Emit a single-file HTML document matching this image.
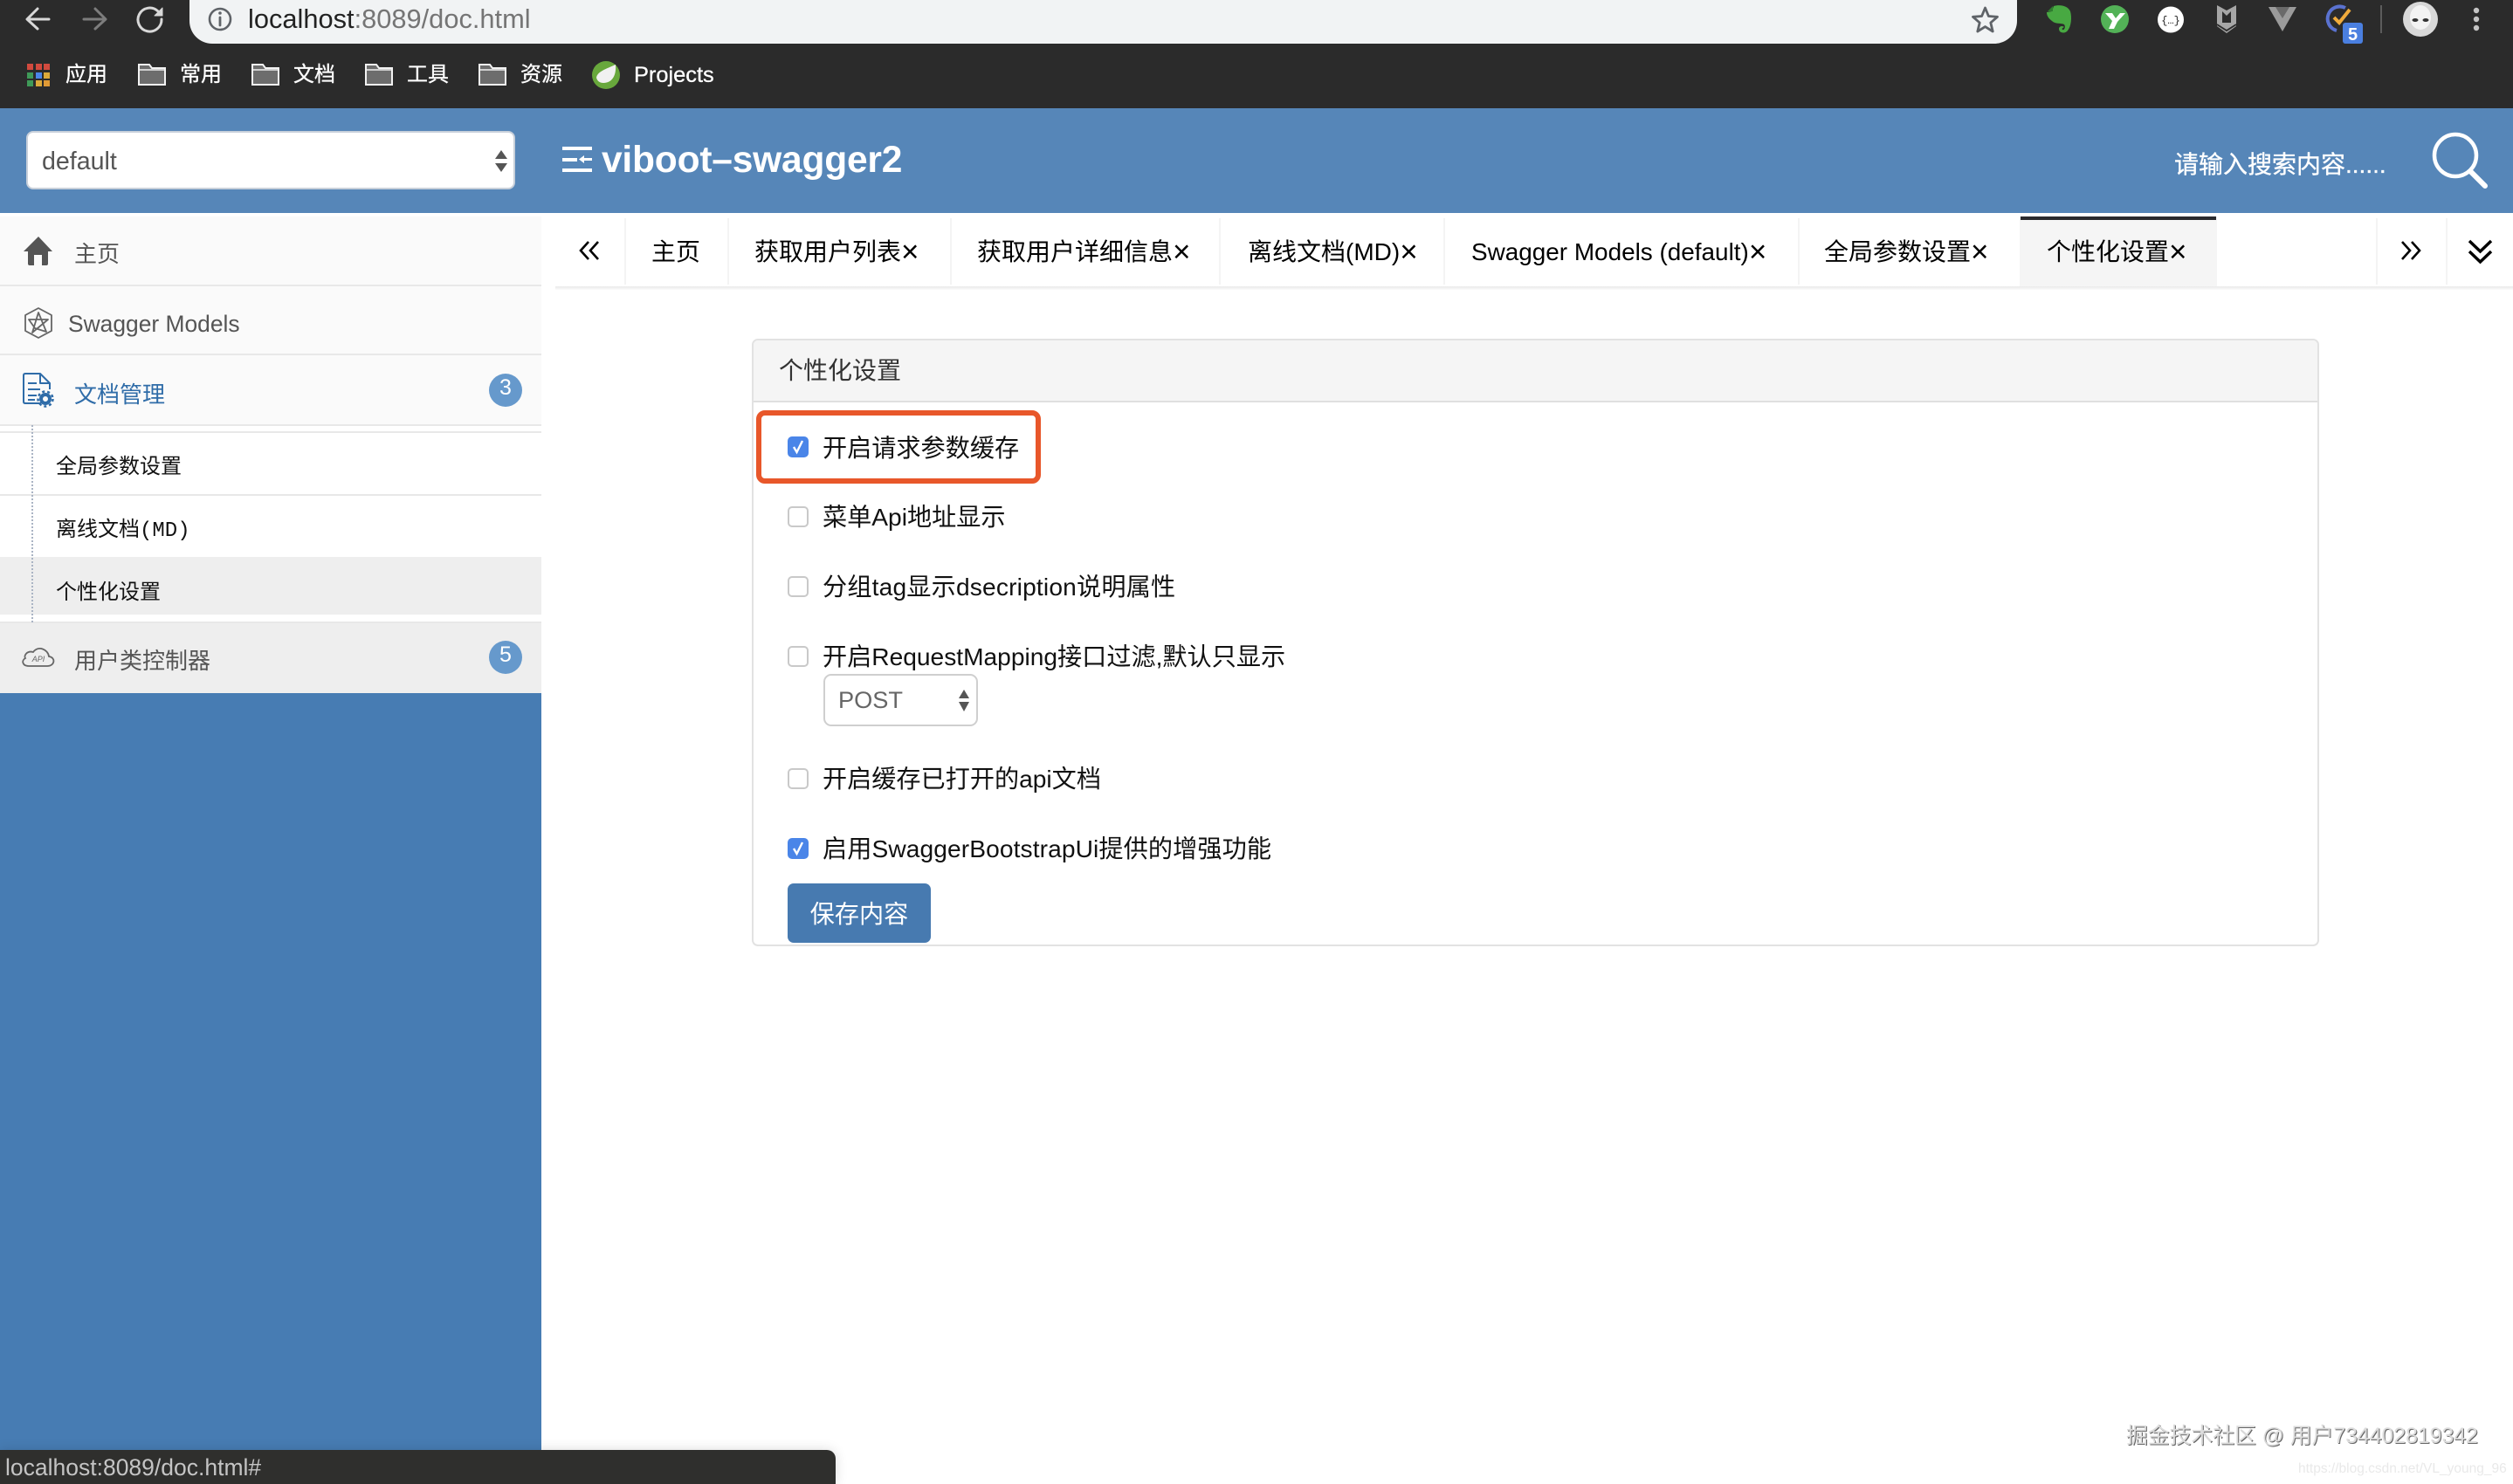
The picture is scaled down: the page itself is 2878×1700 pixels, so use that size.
<!DOCTYPE html>
<html lang="zh-CN">
<head>
<meta charset="utf-8">
<title>viboot-swagger2</title>
<style>
html,body{margin:0;padding:0;background:#fff;}
#p{position:relative;width:2878px;height:1700px;overflow:hidden;background:#fff;font-family:"Liberation Sans","Noto Sans CJK SC",sans-serif;}
#p div{position:absolute;box-sizing:border-box;}
.t{white-space:nowrap;line-height:40px;height:40px;}
.tab{font-size:28px;color:#000;}
.tab i{font-style:normal;font-size:35px;line-height:0;position:relative;top:2px;font-weight:normal;}
.lab{font-size:28.15px;color:#111;left:942px;}
.menu{font-size:26px;color:#555;}
.sub{font-size:24px;color:#111;left:64px;font-family:"Liberation Mono","Noto Sans CJK SC",monospace;}
.bm{font-size:24px;color:#fff;-webkit-text-stroke:.3px #fff;}
.cb{left:902px;width:24px;height:24px;border:2px solid #c9c9c9;border-radius:5px;background:#fff;}
.cb.on{background:#4a85e8;border-color:#4a85e8;}
.dv{top:250px;width:2px;height:76px;background:#f4f4f4;}
.li{left:0;width:620px;height:2px;background:#e8e8e8;}
svg{position:absolute;left:0;top:0;}
</style>
</head>
<body>
<div id="p">
  <!-- browser chrome -->
  <div style="left:0;top:0;width:2878px;height:124px;background:#2b2b2b;"></div>
  <div style="left:217px;top:-30px;width:2093px;height:80px;background:#f1f3f4;border-radius:26px;"></div>
  <div class="t" style="left:284px;top:2px;font-size:30.8px;color:#757575;"><span style="color:#222;">localhost</span>:8089/doc.html</div>

  <div class="t bm" style="left:75px;top:66px;">应用</div>
  <div class="t bm" style="left:206px;top:66px;">常用</div>
  <div class="t bm" style="left:336px;top:66px;">文档</div>
  <div class="t bm" style="left:466px;top:66px;">工具</div>
  <div class="t bm" style="left:596px;top:66px;">资源</div>
  <div class="t bm" style="left:726px;top:66px;font-size:25.4px;">Projects</div>

  <!-- header -->
  <div style="left:0;top:124px;width:2878px;height:120px;background:#5686b8;"></div>
  <div style="left:30px;top:150px;width:560px;height:67px;background:#fff;border:2px solid #c8d0da;border-radius:8px;"></div>
  <div class="t" style="left:48px;top:165px;font-size:28.6px;color:#555;">default</div>
  <div class="t" style="left:689px;top:164px;font-size:42.5px;font-weight:bold;color:#fff;letter-spacing:-.2px;">viboot–swagger2</div>
  <div class="t" style="left:2490px;top:169px;font-size:28px;color:#fff;-webkit-text-stroke:.35px #fff;">请输入搜索内容......</div>

  <!-- sidebar -->
  <div style="left:0;top:793px;width:620px;height:907px;background:#477cb3;"></div>
  <div style="left:0;top:248px;width:620px;height:239px;background:#fafafa;"></div>
  <div class="li" style="top:326px;"></div>
  <div class="li" style="top:405px;"></div>
  <div class="li" style="top:486px;"></div>
  <div class="li" style="top:494px;"></div>
  <div class="li" style="top:566px;"></div>
  <div style="left:0;top:638px;width:620px;height:66px;background:#eeeeee;"></div>
  <div class="li" style="top:712px;"></div>
  <div style="left:0;top:714px;width:620px;height:80px;background:#eeeeee;"></div>
  <div style="left:36px;top:487px;width:0;height:226px;border-left:2px dotted #aab4c4;"></div>

  <div class="t menu" style="left:85px;top:271px;">主页</div>
  <div class="t menu" style="left:78px;top:351px;font-size:26.4px;">Swagger Models</div>
  <div class="t menu" style="left:85px;top:432px;color:#2f6ca8;">文档管理</div>
  <div class="t menu" style="left:85px;top:737px;">用户类控制器</div>
  <div class="t sub" style="top:517px;">全局参数设置</div>
  <div class="t sub" style="top:589px;">离线文档(MD)</div>
  <div class="t sub" style="top:661px;">个性化设置</div>

  <div style="left:560px;top:428px;width:38px;height:38px;border-radius:19px;background:#6699cc;"></div>
  <div class="t" style="left:560px;top:424px;width:38px;text-align:center;font-size:25px;color:#fff;">3</div>
  <div style="left:560px;top:734px;width:38px;height:38px;border-radius:19px;background:#6699cc;"></div>
  <div class="t" style="left:560px;top:730px;width:38px;text-align:center;font-size:25px;color:#fff;">5</div>

  <!-- tabs -->
  <div style="left:636px;top:328px;width:2242px;height:4px;background:linear-gradient(#e9e9e9,#fbfbfb);"></div>
  <div class="dv" style="left:715px;"></div>
  <div class="dv" style="left:833px;"></div>
  <div class="dv" style="left:1088px;"></div>
  <div class="dv" style="left:1396px;"></div>
  <div class="dv" style="left:1653px;"></div>
  <div class="dv" style="left:2059px;"></div>
  <div class="dv" style="left:2721px;"></div>
  <div class="dv" style="left:2801px;"></div>
  <div style="left:2313px;top:248px;width:226px;height:80px;background:#f5f5f5;"></div>
  <div style="left:2314px;top:248px;width:224px;height:4px;background:#2b2b2e;"></div>

  <div class="t tab" style="left:746px;top:269px;">主页</div>
  <div class="t tab" style="left:864px;top:269px;">获取用户列表<i>×</i></div>
  <div class="t tab" style="left:1119px;top:269px;">获取用户详细信息<i>×</i></div>
  <div class="t tab" style="left:1429px;top:269px;">离线文档(MD)<i>×</i></div>
  <div class="t tab" style="left:1685px;top:269px;font-size:27.9px;">Swagger Models (default)<i>×</i></div>
  <div class="t tab" style="left:2089px;top:269px;">全局参数设置<i>×</i></div>
  <div class="t tab" style="left:2344px;top:269px;">个性化设置<i>×</i></div>

  <!-- panel -->
  <div style="left:861px;top:388px;width:1795px;height:696px;border:2px solid #e2e2e2;border-radius:7px;background:#fff;"></div>
  <div style="left:863px;top:390px;width:1791px;height:71px;background:#f5f5f5;border-bottom:2px solid #dfdfdf;border-radius:5px 5px 0 0;"></div>
  <div class="t" style="left:892px;top:405px;font-size:28px;color:#333;">个性化设置</div>

  <div style="left:866px;top:470px;width:326px;height:84px;border:6px solid #e8572a;border-radius:10px;"></div>

  <div class="cb on" style="top:500px;"></div>
  <div class="t lab" style="top:494px;">开启请求参数缓存</div>
  <div class="cb" style="top:580px;"></div>
  <div class="t lab" style="top:573px;">菜单Api地址显示</div>
  <div class="cb" style="top:660px;"></div>
  <div class="t lab" style="top:653px;letter-spacing:.18px;">分组tag显示dsecription说明属性</div>
  <div class="cb" style="top:740px;"></div>
  <div class="t lab" style="top:733px;">开启RequestMapping接口过滤,默认只显示</div>
  <div style="left:943px;top:772px;width:177px;height:60px;background:#fff;border:2px solid #cfcfcf;border-radius:9px;"></div>
  <div class="t" style="left:960px;top:782px;font-size:27.2px;color:#666;">POST</div>
  <div class="cb" style="top:880px;"></div>
  <div class="t lab" style="top:873px;">开启缓存已打开的api文档</div>
  <div class="cb on" style="top:960px;"></div>
  <div class="t lab" style="top:953px;letter-spacing:.1px;">启用SwaggerBootstrapUi提供的增强功能</div>
  <div style="left:902px;top:1012px;width:164px;height:68px;background:#477ab0;border-radius:7px;"></div>
  <div class="t" style="left:902px;top:1027px;width:164px;text-align:center;font-size:28.2px;color:#fff;">保存内容</div>

  <!-- status bubble -->
  <div style="left:0;top:1661px;width:957px;height:39px;background:#2f2f2d;border-radius:0 10px 0 0;box-shadow:0 0 14px rgba(0,0,0,.14);"></div>
  <div class="t" style="left:6px;top:1661px;font-size:26.5px;color:#c4c4c4;">localhost:8089/doc.html#</div>

  <!-- watermarks -->
  <div class="t" style="left:2435px;top:1626px;font-size:24.8px;color:#dcdcdc;text-shadow:1px 1px 0 #666;">掘金技术社区 @ 用户734402819342</div>
  <div class="t" style="left:2632px;top:1663px;font-size:15.5px;color:#e9e9e9;">https://blog.csdn.net/VL_young_96</div>

  <!-- icons -->
  <svg width="2878" height="1700" viewBox="0 0 2878 1700">
    <!-- nav -->
    <g fill="none" stroke-linecap="round" stroke-linejoin="round">
      <path d="M56 22H33M43 10L31 22L43 33" stroke="#d8d8d8" stroke-width="3"/>
      <path d="M96 22H119M109 10L121 22L109 33" stroke="#7d7d7d" stroke-width="3"/>
      <path d="M185 22A13.500 13.500 0 1 1 180.500 12.500" stroke="#d8d8d8" stroke-width="3"/>
      <path d="M186 9V18H177Z" fill="#d8d8d8" stroke="#d8d8d8" stroke-width="1"/>
      <circle cx="252" cy="22" r="12" stroke="#5f6368" stroke-width="2.600"/>
      <path d="M252 20V29" stroke="#5f6368" stroke-width="2.800"/>
    </g>
    <circle cx="252" cy="15" r="1.800" fill="#5f6368"/>
    <path d="M2273.500 9L2277.400 18.500L2287.500 19.300L2279.800 26L2282.200 36L2273.500 30.600L2264.800 36L2267.200 26L2259.500 19.300L2269.600 18.500Z" fill="none" stroke="#5f6368" stroke-width="2.800" stroke-linejoin="round"/>

    <!-- extensions -->
    <path d="M2352 7C2358 5 2368 6 2371 13C2373 20 2372 30 2368 35C2365 39 2358 38 2358 33C2358 30 2362 29 2364 31C2362 32 2361 33 2362 34C2364 35 2366 31 2364 28C2360 26 2354 28 2350 24C2346 21 2344 18 2344 14L2350 13Z" fill="#48a942"/>
    <path d="M2351 7V13H2345Z" fill="#2e7d2e"/>
    <circle cx="2422" cy="22" r="16" fill="#53b257"/>
    <path d="M2411 15H2419L2423 21L2428 15H2434L2425 25L2421 33H2415L2419 24Z" fill="#fff"/>
    <circle cx="2486" cy="22.500" r="15" fill="#fff"/>
    <text x="2486" y="27" text-anchor="middle" font-family="Liberation Mono,monospace" font-size="12" fill="#222">{…}</text>
    <path d="M2539 6L2550 12L2561 6V30L2550 38L2539 30Z" fill="#a6a6a6"/>
    <path d="M2545 13L2550 18L2555 13V26H2545Z" fill="#2b2b2b"/>
    <path d="M2539 28L2550 35L2561 28" fill="none" stroke="#2b2b2b" stroke-width="1.800"/>
    <path d="M2598 8H2630L2614 36Z" fill="#9b9b9b"/>
    <path d="M2606 8H2622L2614 21Z" fill="#6a6a6a"/>
    <path d="M2686 9A14 14 0 1 0 2676 35" fill="none" stroke="#5a72d0" stroke-width="4"/>
    <path d="M2673 20L2679 26L2691 11" fill="none" stroke="#f0ab3c" stroke-width="4"/>
    <rect x="2683" y="26" width="23" height="24" rx="3" fill="#4a7fe0"/>
    <text x="2694.500" y="46" text-anchor="middle" font-family="Liberation Sans,sans-serif" font-size="20" font-weight="bold" fill="#fff">5</text>
    <rect x="2726" y="6" width="2" height="32" fill="#5c5c5c"/>
    <circle cx="2772" cy="22" r="20" fill="#d8d8d8"/>
    <ellipse cx="2772" cy="20" rx="12" ry="14" fill="#f3f3f3"/>
    <ellipse cx="2766" cy="23" rx="3.500" ry="2" fill="#333"/>
    <ellipse cx="2778" cy="23" rx="3.500" ry="2" fill="#333"/>
    <circle cx="2836" cy="12" r="3.200" fill="#c4c4c4"/>
    <circle cx="2836" cy="22" r="3.200" fill="#c4c4c4"/>
    <circle cx="2836" cy="32" r="3.200" fill="#c4c4c4"/>

    <!-- bookmarks -->
    <g>
      <rect x="31" y="73" width="7" height="7" fill="#d24a3e"/><rect x="41" y="73" width="7" height="7" fill="#d24a3e"/><rect x="50" y="73" width="7" height="7" fill="#d24a3e"/>
      <rect x="31" y="83" width="7" height="7" fill="#3f9a58"/><rect x="41" y="83" width="7" height="7" fill="#4a86e8"/><rect x="50" y="83" width="7" height="7" fill="#dba93a"/>
      <rect x="31" y="92" width="7" height="7" fill="#3f9a58"/><rect x="41" y="92" width="7" height="7" fill="#dba93a"/><rect x="50" y="92" width="7" height="7" fill="#e09a35"/>
    </g>
    <g fill="#6d6d6d" stroke="#f2f2f2" stroke-width="2">
      <path d="M159 74H171L174 78H189V97H159Z"/>
      <path d="M289 74H301L304 78H319V97H289Z"/>
      <path d="M419 74H431L434 78H449V97H419Z"/>
      <path d="M549 74H561L564 78H579V97H549Z"/>
    </g>
    <path d="M159 80H189M289 80H319M419 80H449M549 80H579" stroke="#f2f2f2" stroke-width="1.500"/>
    <ellipse cx="694" cy="86" rx="16" ry="16" fill="#68a83c"/>
    <path d="M705 74C706 85 702 95 691 95C687 95 684 93 683 89C684 82 694 79 705 74Z" fill="#f1f1f1"/>

    <!-- header -->
    <path d="M567 182L574 172L581 182Z M567 187L574 197L581 187Z" fill="#555"/>
    <g fill="#fff">
      <rect x="644" y="168" width="34" height="4"/>
      <rect x="644" y="193" width="34" height="4"/>
      <rect x="644" y="181" width="17" height="4"/>
      <rect x="668" y="181" width="10" height="3"/>
      <path d="M663 182.500L669 178V187Z"/>
    </g>
    <circle cx="2812" cy="178" r="24" fill="none" stroke="#fff" stroke-width="4.500"/>
    <path d="M2829 196L2846 213" stroke="#fff" stroke-width="6" stroke-linecap="round"/>

    <!-- sidebar icons -->
    <path d="M44 271L60 288H55V302Q55 304 53 304H48V292H39V304H34Q32 304 32 302V288H27Z" fill="#555"/>
    <g fill="none" stroke="#666" stroke-width="1.800" stroke-linejoin="round">
      <path d="M44 353L59 361V379L44 387L29 379V361Z"/>
      <path d="M44 358L53 380L40 376L33 366L55 366L37 381Z"/>
    </g>
    <g fill="none" stroke="#2f6ca8" stroke-width="2" stroke-linejoin="round">
      <path d="M47 462H29Q27 462 27 460V430Q27 428 29 428H46L57 439V446"/>
      <path d="M46 428V439H57"/>
      <path d="M32 439H42M32 446H46M32 453H42M32 458H40"/>
    </g>
    <circle cx="52" cy="457" r="5" fill="none" stroke="#2f6ca8" stroke-width="4"/>
    <circle cx="52" cy="457" r="8.500" fill="none" stroke="#2f6ca8" stroke-width="2.500" stroke-dasharray="3 3"/>
    <path d="M33 763H54C63 763 64 753 56 752C55 744 44 739 38 747C31 745 27 751 29 754C24 757 26 763 33 763Z" fill="none" stroke="#666" stroke-width="1.800"/>
    <text x="44" y="758" text-anchor="middle" font-family="Liberation Sans,sans-serif" font-size="9" font-style="italic" fill="#666">API</text>

    <!-- tab arrows -->
    <g fill="none" stroke="#000" stroke-width="2.600">
      <path d="M674 277L665 287L674 297M685 277L676 287L685 297"/>
      <path d="M2751 277L2760 287L2751 297M2762 277L2771 287L2762 297"/>
    </g>
    <g fill="none" stroke="#000" stroke-width="3.400">
      <path d="M2828 276L2840.500 288L2853 276M2828 288L2840.500 300L2853 288"/>
    </g>

    <!-- checks -->
    <path d="M909 512L912.500 518L919 505M909 972L912.500 978L919 965" fill="none" stroke="#fff" stroke-width="2.400"/>
    <!-- POST arrows -->
    <path d="M1098 800L1104 790L1110 800Z M1098 804L1104 815L1110 804Z" fill="#555"/>
  </svg>
</div>
</body>
</html>
